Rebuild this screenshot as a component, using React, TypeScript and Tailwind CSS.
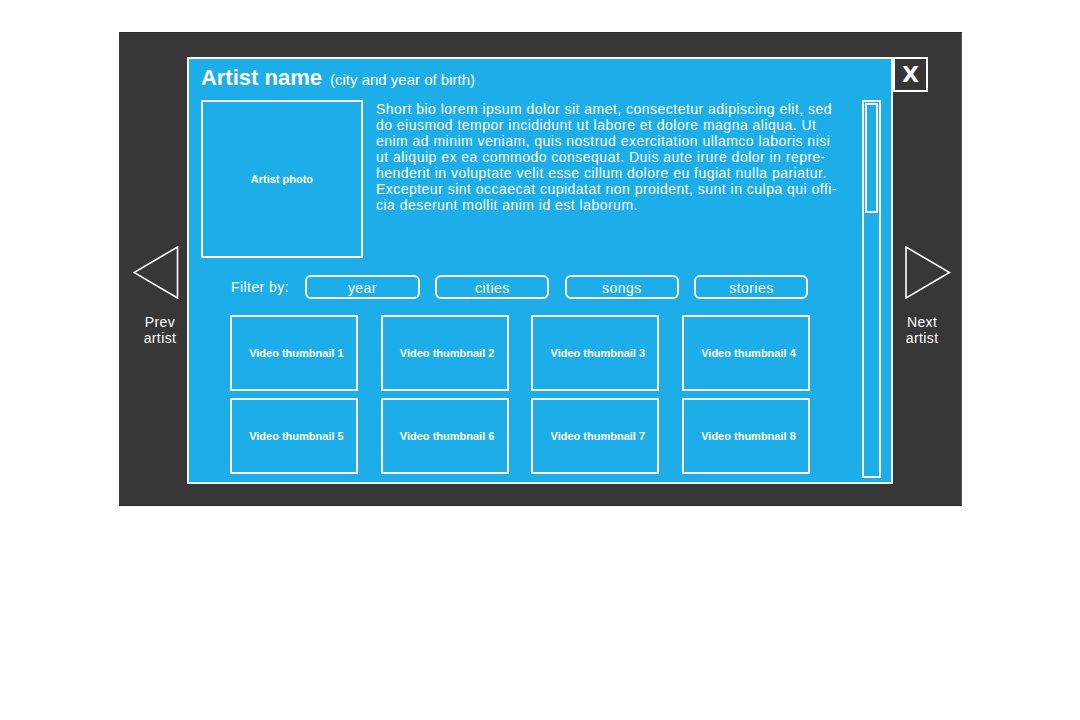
import React from 'react';

const thumbs = [1, 2, 3, 4, 5, 6, 7, 8];
const filters = ['year', 'cities', 'songs', 'stories'];

const bio = [
  'Short bio lorem ipsum dolor sit amet, consectetur adipiscing elit, sed',
  'do eiusmod tempor incididunt ut labore et dolore magna aliqua. Ut',
  'enim ad minim veniam, quis nostrud exercitation ullamco laboris nisi',
  'ut aliquip ex ea commodo consequat. Duis aute irure dolor in repre-',
  'henderit in voluptate velit esse cillum dolore eu fugiat nulla pariatur.',
  'Excepteur sint occaecat cupidatat non proident, sunt in culpa qui offi-',
  'cia deserunt mollit anim id est laborum.',
];

const Arrow: React.FC<{ dir: 'left' | 'right' }> = ({ dir }) => (
  <svg width="46" height="53" viewBox="0 0 46 53" className="block">
    {dir === 'left' ? (
      <polygon points="44.5,1 44.5,52 1,26.5" fill="none" stroke="#fff" strokeWidth="1.6" />
    ) : (
      <polygon points="1,1 1,52 44.5,26.5" fill="none" stroke="#fff" strokeWidth="1.6" />
    )}
  </svg>
);

export default function App() {
  return (
    <div className="h-[720px] w-[1080px] bg-white pt-[32px] font-['Liberation_Sans',Arial,sans-serif] text-white">
      <div className="ml-[119px] flex h-[474px] w-[843px] items-start border-t border-b border-r border-t-[#2a2a2a] border-b-[#2a2a2a] border-r-[#555] bg-[#373737] pt-[24px]">
        {/* prev */}
        <div className="flex w-[68px] flex-col pt-[189px]">
          <div className="ml-[14px]">
            <Arrow dir="left" />
          </div>
          <div className="ml-[23px] mt-[15px] w-[36px] text-center text-[14px] leading-[16px] tracking-[0.4px]">
            Prev
            <br />
            artist
          </div>
        </div>

        {/* main panel */}
        <div className="h-[427px] w-[707px] border-2 border-[#f3fbff] bg-[#1daee9] pl-[12px] pt-[8px]">
          <div className="h-[22px] text-[22px] leading-[22px] whitespace-nowrap">
            <span className="font-bold">Artist name</span>
            <span className="ml-[8px] text-[15px] leading-none">(city and year of birth)</span>
          </div>

          <div className="mt-[11px] flex">
            <div className="w-[661px]">
              <div className="flex">
                <div className="flex h-[158px] w-[162px] shrink-0 items-center justify-center border-2 border-white text-[11px] font-bold">
                  Artist photo
                </div>
                <div className="ml-[13px] pt-[1px] text-[14px] leading-[16px] tracking-[0.48px] whitespace-nowrap">
                  {bio.map((l, i) => (
                    <div key={i}>{l}</div>
                  ))}
                </div>
              </div>

              <div className="mt-[17px] flex items-center pl-[30px]">
                <span className="w-[74px] text-[14px] leading-[16px] tracking-[0.45px]">Filter by:</span>
                <div className="flex gap-[15.5px]">
                  {filters.map((f, i) => (
                    <button
                      key={f}
                      className={`h-[24px] ${i === 0 ? 'w-[115px]' : 'w-[114px]'} rounded-[6px] border-2 border-white pt-[1px] text-[14px] leading-[16px] tracking-[0.45px] text-white`}
                    >
                      {f}
                    </button>
                  ))}
                </div>
              </div>

              <div className="mt-[16px] grid grid-cols-[128px_128px_128px_128px] gap-x-[22.7px] gap-y-[7px] pl-[29px]">
                {thumbs.map(n => (
                  <div
                    key={n}
                    className="flex h-[76px] items-center justify-center border-2 border-white pl-[5px] text-[11px] font-bold"
                  >
                    Video thumbnail {n}
                  </div>
                ))}
              </div>
            </div>

            {/* scrollbar */}
            <div className="h-[378px] w-[19px] border-2 border-white p-[1px]">
              <div className="h-[110px] w-full border-2 border-white"></div>
            </div>
          </div>
        </div>

        {/* close + next */}
        <div className="flex w-[68px] flex-col">
          <button className="flex h-[35px] w-[35px] items-center justify-center border-2 border-white bg-[#363636] font-['DejaVu_Sans',sans-serif] text-[22px] leading-none font-bold text-white">
            X
          </button>
          <div className="ml-[12px] mt-[154px]">
            <Arrow dir="right" />
          </div>
          <div className="ml-[11px] mt-[15px] w-[36px] text-center text-[14px] leading-[16px] tracking-[0.4px]">
            Next
            <br />
            artist
          </div>
        </div>
      </div>
    </div>
  );
}
